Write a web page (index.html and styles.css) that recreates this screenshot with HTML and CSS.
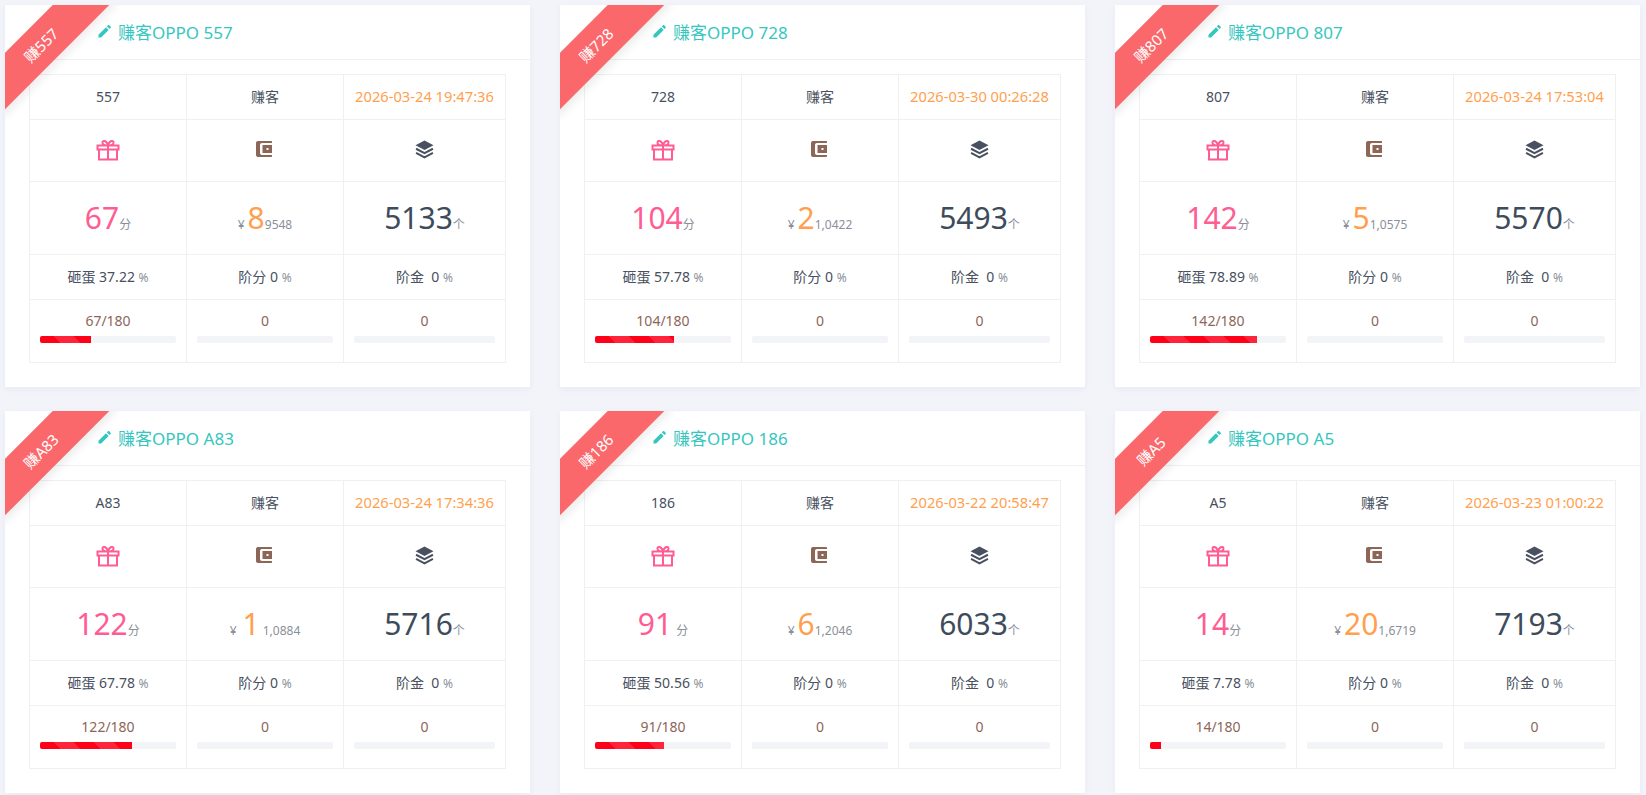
FILE: index.html
```html
<!DOCTYPE html>
<html lang="zh">
<head>
    <meta charset="UTF-8">
    <title>赚客</title>
    <link rel="stylesheet" href="styles.css">
</head>
<body>
    <svg class="defs">
        <symbol id="i-pencil" viewBox="0 0 14 14"><path d="M0.5 13.5V10.6L8.6 2.5L11.5 5.4L3.4 13.5ZM9.6 1.5L10.7 0.4C11.1 0 11.7 0 12.1 0.4L13.6 1.9C14 2.3 14 2.9 13.6 3.3L12.5 4.4Z"/></symbol>
        <symbol id="i-gift" viewBox="0 0 24 22"><path fill="none" stroke="currentColor" stroke-width="2" d="M1.5 6.5H22.5V10.5H1.5ZM3 10.5V20.5H21V10.5M12 6.5V20.5M12 6.5C9 6.5 6.5 5.6 6.5 3.4C6.5 1.2 10.6 1 12 6.5C13.4 1 17.5 1.2 17.5 3.4C17.5 5.6 15 6.5 12 6.5Z"/></symbol>
        <symbol id="i-wallet" viewBox="0 0 18 17"><path fill-rule="evenodd" d="M2 0H15C15.6 0 16 .4 16 1V2H6C4.9 2 4 2.9 4 4V12C4 13.1 4.9 14 6 14H16V15C16 15.6 15.6 16 15 16H2C.9 16 0 15.1 0 14V2C0 .9.9 0 2 0ZM6.5 4H16V12H6.5ZM10.5 7V9H12.5V7Z"/></symbol>
        <symbol id="i-layers" viewBox="0 0 18 18"><path d="M9 0.5L17.5 5L9 9.5L0.5 5Z"/><path fill="none" stroke="currentColor" stroke-width="1.9" d="M1 8.3L9 12.5L17 8.3M1 12.3L9 16.5L17 12.3"/></symbol>
    </svg>

    <div class="grid">

        <div class="card">
            <div class="ribbon"><span>赚557</span></div>
            <div class="card-head"><svg class="pencil"><use href="#i-pencil"/></svg>赚客OPPO 557</div>
            <table class="info">
                <colgroup><col class="c1"><col class="c2"><col class="c3"></colgroup>
                <tr class="r-name"><td>557</td><td>赚客</td><td class="date">2026-03-24 19:47:36</td></tr>
                <tr class="r-icon">
                    <td><svg class="ico gift"><use href="#i-gift"/></svg></td>
                    <td><svg class="ico wallet"><use href="#i-wallet"/></svg></td>
                    <td><svg class="ico layers"><use href="#i-layers"/></svg></td>
                </tr>
                <tr class="r-num">
                    <td><b class="pink">67</b><small>分</small></td>
                    <td><small class="yen">¥</small><b class="orange">8</b><small>9548</small></td>
                    <td><b class="dark">5133</b><small>个</small></td>
                </tr>
                <tr class="r-rate">
                    <td>砸蛋 37.22 <small>%</small></td>
                    <td>阶分 0 <small>%</small></td>
                    <td>阶金&nbsp; 0 <small>%</small></td>
                </tr>
                <tr class="r-prog">
                    <td><div class="val">67/180</div><div class="bar"><div class="fill" style="width:37.22%"></div></div></td>
                    <td><div class="val">0</div><div class="bar"></div></td>
                    <td><div class="val">0</div><div class="bar"></div></td>
                </tr>
            </table>
        </div>

        <div class="card">
            <div class="ribbon"><span>赚728</span></div>
            <div class="card-head"><svg class="pencil"><use href="#i-pencil"/></svg>赚客OPPO 728</div>
            <table class="info">
                <colgroup><col class="c1"><col class="c2"><col class="c3"></colgroup>
                <tr class="r-name"><td>728</td><td>赚客</td><td class="date">2026-03-30 00:26:28</td></tr>
                <tr class="r-icon">
                    <td><svg class="ico gift"><use href="#i-gift"/></svg></td>
                    <td><svg class="ico wallet"><use href="#i-wallet"/></svg></td>
                    <td><svg class="ico layers"><use href="#i-layers"/></svg></td>
                </tr>
                <tr class="r-num">
                    <td><b class="pink">104</b><small>分</small></td>
                    <td><small class="yen">¥</small><b class="orange">2</b><small>1,0422</small></td>
                    <td><b class="dark">5493</b><small>个</small></td>
                </tr>
                <tr class="r-rate">
                    <td>砸蛋 57.78 <small>%</small></td>
                    <td>阶分 0 <small>%</small></td>
                    <td>阶金&nbsp; 0 <small>%</small></td>
                </tr>
                <tr class="r-prog">
                    <td><div class="val">104/180</div><div class="bar"><div class="fill" style="width:57.78%"></div></div></td>
                    <td><div class="val">0</div><div class="bar"></div></td>
                    <td><div class="val">0</div><div class="bar"></div></td>
                </tr>
            </table>
        </div>

        <div class="card">
            <div class="ribbon"><span>赚807</span></div>
            <div class="card-head"><svg class="pencil"><use href="#i-pencil"/></svg>赚客OPPO 807</div>
            <table class="info">
                <colgroup><col class="c1"><col class="c2"><col class="c3"></colgroup>
                <tr class="r-name"><td>807</td><td>赚客</td><td class="date">2026-03-24 17:53:04</td></tr>
                <tr class="r-icon">
                    <td><svg class="ico gift"><use href="#i-gift"/></svg></td>
                    <td><svg class="ico wallet"><use href="#i-wallet"/></svg></td>
                    <td><svg class="ico layers"><use href="#i-layers"/></svg></td>
                </tr>
                <tr class="r-num">
                    <td><b class="pink">142</b><small>分</small></td>
                    <td><small class="yen">¥</small><b class="orange">5</b><small>1,0575</small></td>
                    <td><b class="dark">5570</b><small>个</small></td>
                </tr>
                <tr class="r-rate">
                    <td>砸蛋 78.89 <small>%</small></td>
                    <td>阶分 0 <small>%</small></td>
                    <td>阶金&nbsp; 0 <small>%</small></td>
                </tr>
                <tr class="r-prog">
                    <td><div class="val">142/180</div><div class="bar"><div class="fill" style="width:78.89%"></div></div></td>
                    <td><div class="val">0</div><div class="bar"></div></td>
                    <td><div class="val">0</div><div class="bar"></div></td>
                </tr>
            </table>
        </div>

        <div class="card">
            <div class="ribbon"><span>赚A83</span></div>
            <div class="card-head"><svg class="pencil"><use href="#i-pencil"/></svg>赚客OPPO A83</div>
            <table class="info">
                <colgroup><col class="c1"><col class="c2"><col class="c3"></colgroup>
                <tr class="r-name"><td>A83</td><td>赚客</td><td class="date">2026-03-24 17:34:36</td></tr>
                <tr class="r-icon">
                    <td><svg class="ico gift"><use href="#i-gift"/></svg></td>
                    <td><svg class="ico wallet"><use href="#i-wallet"/></svg></td>
                    <td><svg class="ico layers"><use href="#i-layers"/></svg></td>
                </tr>
                <tr class="r-num">
                    <td><b class="pink">122</b><small>分</small></td>
                    <td><small class="yen">¥</small><b class="orange one">1</b><small>1,0884</small></td>
                    <td><b class="dark">5716</b><small>个</small></td>
                </tr>
                <tr class="r-rate">
                    <td>砸蛋 67.78 <small>%</small></td>
                    <td>阶分 0 <small>%</small></td>
                    <td>阶金&nbsp; 0 <small>%</small></td>
                </tr>
                <tr class="r-prog">
                    <td><div class="val">122/180</div><div class="bar"><div class="fill" style="width:67.78%"></div></div></td>
                    <td><div class="val">0</div><div class="bar"></div></td>
                    <td><div class="val">0</div><div class="bar"></div></td>
                </tr>
            </table>
        </div>

        <div class="card">
            <div class="ribbon"><span>赚186</span></div>
            <div class="card-head"><svg class="pencil"><use href="#i-pencil"/></svg>赚客OPPO 186</div>
            <table class="info">
                <colgroup><col class="c1"><col class="c2"><col class="c3"></colgroup>
                <tr class="r-name"><td>186</td><td>赚客</td><td class="date">2026-03-22 20:58:47</td></tr>
                <tr class="r-icon">
                    <td><svg class="ico gift"><use href="#i-gift"/></svg></td>
                    <td><svg class="ico wallet"><use href="#i-wallet"/></svg></td>
                    <td><svg class="ico layers"><use href="#i-layers"/></svg></td>
                </tr>
                <tr class="r-num">
                    <td><b class="pink">91</b><small class="gap">分</small></td>
                    <td><small class="yen">¥</small><b class="orange">6</b><small>1,2046</small></td>
                    <td><b class="dark">6033</b><small>个</small></td>
                </tr>
                <tr class="r-rate">
                    <td>砸蛋 50.56 <small>%</small></td>
                    <td>阶分 0 <small>%</small></td>
                    <td>阶金&nbsp; 0 <small>%</small></td>
                </tr>
                <tr class="r-prog">
                    <td><div class="val">91/180</div><div class="bar"><div class="fill" style="width:50.56%"></div></div></td>
                    <td><div class="val">0</div><div class="bar"></div></td>
                    <td><div class="val">0</div><div class="bar"></div></td>
                </tr>
            </table>
        </div>

        <div class="card">
            <div class="ribbon"><span>赚A5</span></div>
            <div class="card-head"><svg class="pencil"><use href="#i-pencil"/></svg>赚客OPPO A5</div>
            <table class="info">
                <colgroup><col class="c1"><col class="c2"><col class="c3"></colgroup>
                <tr class="r-name"><td>A5</td><td>赚客</td><td class="date">2026-03-23 01:00:22</td></tr>
                <tr class="r-icon">
                    <td><svg class="ico gift"><use href="#i-gift"/></svg></td>
                    <td><svg class="ico wallet"><use href="#i-wallet"/></svg></td>
                    <td><svg class="ico layers"><use href="#i-layers"/></svg></td>
                </tr>
                <tr class="r-num">
                    <td><b class="pink">14</b><small>分</small></td>
                    <td><small class="yen">¥</small><b class="orange">20</b><small>1,6719</small></td>
                    <td><b class="dark">7193</b><small>个</small></td>
                </tr>
                <tr class="r-rate">
                    <td>砸蛋 7.78 <small>%</small></td>
                    <td>阶分 0 <small>%</small></td>
                    <td>阶金&nbsp; 0 <small>%</small></td>
                </tr>
                <tr class="r-prog">
                    <td><div class="val">14/180</div><div class="bar"><div class="fill" style="width:7.78%"></div></div></td>
                    <td><div class="val">0</div><div class="bar"></div></td>
                    <td><div class="val">0</div><div class="bar"></div></td>
                </tr>
            </table>
        </div>

    </div>
</body>
</html>
```

FILE: styles.css
```css
html, body {
    height: 100%;
    overflow: hidden;
}
body {
    margin: 0;
    padding: 5px 6px 0 5px;
    box-sizing: border-box;
    background-color: #f3f4fa;
    font-family: "Noto Sans", "Noto Sans CJK SC", sans-serif;
    font-size: 14px;
    color: #495060;
}
.defs {
    display: none;
}
.grid {
    display: grid;
    grid-template-columns: repeat(3, 525px);
    column-gap: 30px;
    row-gap: 24px;
}
.card {
    position: relative;
    height: 382px;
    background: white;
    box-shadow: 0 2px 6px rgba(100, 110, 150, 0.08);
}
.card-head {
    display: flex;
    align-items: center;
    height: 52px;
    padding: 0 0 2px 93px;
    border-bottom: 1px solid #f0f0f0;
    color: #36c6c0;
    font-size: 17px;
}
.pencil {
    width: 13px;
    height: 13px;
    margin-right: 7px;
    fill: #36c6c0;
}
.ribbon {
    position: absolute;
    top: 0;
    left: 0;
    width: 125px;
    height: 125px;
    overflow: hidden;
}
.ribbon span {
    position: absolute;
    top: 18px;
    left: -42px;
    width: 160px;
    height: 40px;
    line-height: 40px;
    text-align: center;
    text-indent: -6px;
    color: white;
    font-size: 15px;
    background-color: #fb686c;
    box-shadow: 0 5px 8px rgba(0, 0, 0, 0.07);
    transform: rotate(-45deg);
}
.info {
    table-layout: fixed;
    width: 476px;
    margin: 14px 0 0 24px;
    border-collapse: collapse;
}
.c1, .c2 {
    width: 157px;
}
.c3 {
    width: 162px;
}
.info td {
    border: 1px solid #f0f0f0;
    padding: 0;
    text-align: center;
}
.r-name {
    height: 45px;
}
.r-name td {
    padding-bottom: 2px;
}
.r-icon {
    height: 62px;
}
.r-icon td {
    padding-bottom: 2px;
}
.r-num {
    height: 73px;
}
.r-rate {
    height: 45px;
}
.r-rate td {
    padding-bottom: 2px;
}
.r-prog {
    height: 63px;
}
.info .date {
    color: #ff9f4f;
    font-size: 14.7px;
}
.ico {
    display: block;
    margin: 0 auto;
}
.gift {
    width: 24px;
    height: 22px;
    color: #ff5c93;
}
.wallet {
    width: 18px;
    height: 17px;
    fill: #8d6658;
}
.layers {
    width: 19px;
    height: 19px;
    color: #495060;
    fill: #495060;
}
.info b {
    font-weight: normal;
    font-size: 30px;
    line-height: 1;
}
.pink {
    color: #ff5c93;
}
.orange {
    color: #ff9f4f;
}
.dark {
    color: #3e4b5b;
}
.one {
    margin: 0 3px;
}
.info small {
    font-size: 12px;
    color: #8a8f99;
}
.info .gap {
    margin-left: 4px;
}
.yen {
    margin-right: 3px;
}
.val {
    color: #8d6658;
    line-height: 20px;
    margin-top: -8px;
}
.bar {
    height: 7px;
    margin: 5px 10px 0 10px;
    border-radius: 2px;
    background-color: #f3f4f7;
    overflow: hidden;
}
.fill {
    height: 100%;
    background-color: #ff0018;
    background-image: linear-gradient(45deg, rgba(255, 255, 255, 0.14) 25%, transparent 25%, transparent 50%, rgba(255, 255, 255, 0.14) 50%, rgba(255, 255, 255, 0.14) 75%, transparent 75%);
    background-size: 40px 40px;
    background-position: 14px 0;
}
```
